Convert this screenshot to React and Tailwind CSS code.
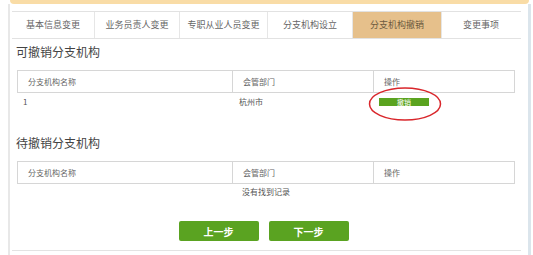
import React from 'react';

const tabs = [
  { label: '基本信息变更', w: 'w-[83px]' },
  { label: '业务员责人变更', w: 'w-[85px]' },
  { label: '专职从业人员变更', w: 'w-[88px]' },
  { label: '分支机构设立', w: 'w-[85px]' },
  { label: '分支机构撤销', w: 'w-[89px]', active: true },
  { label: '变更事项', w: 'w-[78px]' },
];

const font = { fontFamily: '"Noto Sans CJK SC", "Liberation Sans", sans-serif' };

const TableHead = () => (
  <div className="flex h-[23px] border border-[#d6d6d6] text-[8px] text-[#666] bg-white">
    <div className="w-[215px] pl-[10px] flex items-center border-r border-[#d6d6d6]">分支机构名称</div>
    <div className="w-[141px] pl-[10px] flex items-center border-r border-[#d6d6d6]">会管部门</div>
    <div className="flex-1 pl-[10px] flex items-center">操作</div>
  </div>
);

export default function App() {
  return (
    <div className="w-[533px] h-[255px] bg-white overflow-hidden" style={font}>
      <div className="h-[4px] ml-[10px] mr-[4px] bg-[#f9dca6] rounded-b-[4px]" />
      <div className="flex">
        <div className="w-[8px]" />
        <div className="w-[520px] border-l-2 border-[#e8e8e8] pl-[2px] pr-[7px]">
          {/* tabs */}
          <div className="mt-[7px] flex h-[28px] border-y border-[#e2e2e2]">
            {tabs.map((t, i) => (
              <div
                key={t.label}
                className={`${t.w} flex items-center justify-center text-[9px] ${
                  t.active ? 'bg-[#e6c08b] text-[#6d5b40]' : 'text-[#666]'
                } ${i < tabs.length - 1 ? 'border-r border-[#e6e6e6]' : ''}`}
              >
                {t.label}
              </div>
            ))}
          </div>

          <div className="mt-[3px] h-[20px] leading-[20px] pl-[4px] text-[12px] text-[#444]">可撤销分支机构</div>

          <div className="mt-[8px] ml-[5px] w-[498px] relative">
            <TableHead />
            <div className="flex h-[18px] text-[8px] text-[#555]">
              <div className="w-[216px] pl-[6px] flex items-center">1</div>
              <div className="w-[141px] pl-[6px] flex items-center">杭州市</div>
              <div className="flex-1 pl-[5px] flex items-center">
                <button className="w-[50px] h-[8px] bg-[#5aa31f] text-white text-[7px] leading-[8px] flex items-center justify-center">
                  撤销
                </button>
              </div>
            </div>
            <svg className="absolute left-[351px] top-[16px]" width="74" height="36" viewBox="0 0 74 36">
              <ellipse cx="37" cy="18" rx="35.5" ry="16" fill="none" stroke="#d9262b" strokeWidth="1.5" />
            </svg>
          </div>

          <div className="mt-[22px] h-[20px] leading-[20px] pl-[4px] text-[12px] text-[#444]">待撤销分支机构</div>

          <div className="mt-[8px] ml-[5px] w-[498px]">
            <TableHead />
            <div className="h-[16px] flex items-center justify-center text-[8px] text-[#555]">没有找到记录</div>
          </div>

          <div className="mt-[21px] flex justify-center gap-[10px] pr-[6px]">
            <button className="w-[80px] h-[20px] rounded-[2px] bg-[#5aa321] text-white text-[10px] font-bold">上一步</button>
            <button className="w-[80px] h-[20px] rounded-[2px] bg-[#5aa321] text-white text-[10px] font-bold">下一步</button>
          </div>

          <div className="mt-[9px] border-b border-[#e3e3e3]" />
        </div>
        <div className="w-[3px] bg-[#dbe5ec] h-[255px]" />
      </div>
    </div>
  );
}
